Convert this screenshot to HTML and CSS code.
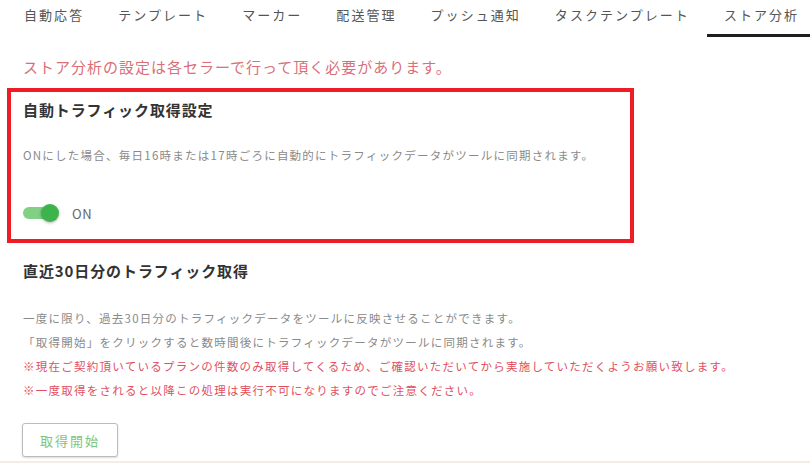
FILE: index.html
```html
<!DOCTYPE html>
<html>
<head>
	<meta charset="utf-8">
	<title>ストア分析</title>
	<link rel="stylesheet" href="styles.css">
</head>
<body>
	<div class="page">
		<div class="tabs">
			<div class="tab">自動応答</div>
			<div class="tab">テンプレート</div>
			<div class="tab">マーカー</div>
			<div class="tab">配送管理</div>
			<div class="tab">プッシュ通知</div>
			<div class="tab">タスクテンプレート</div>
			<div class="tab active">ストア分析</div>
		</div>

		<p class="notice">ストア分析の設定は各セラーで行って頂く必要があります。</p>

		<div class="auto-box">
			<h2 class="title">自動トラフィック取得設定</h2>
			<p class="desc">ONにした場合、毎日16時または17時ごろに自動的にトラフィックデータがツールに同期されます。</p>
			<div class="switch-row">
				<div class="switch">
					<div class="track"></div>
					<div class="knob"></div>
				</div>
				<span class="switch-label">ON</span>
			</div>
		</div>

		<div class="fetch">
			<h2 class="title">直近30日分のトラフィック取得</h2>
			<div class="lines">
				<p class="desc">一度に限り、過去30日分のトラフィックデータをツールに反映させることができます。</p>
				<p class="desc">「取得開始」をクリックすると数時間後にトラフィックデータがツールに同期されます。</p>
				<p class="desc warn">※現在ご契約頂いているプランの件数のみ取得してくるため、ご確認いただいてから実施していただくようお願い致します。</p>
				<p class="desc warn">※一度取得をされると以降この処理は実行不可になりますのでご注意ください。</p>
			</div>
			<button class="start">取得開始</button>
		</div>
	</div>
</body>
</html>
```

FILE: styles.css
```css
html {
	background: #f5ece3;
}

body {
	margin: 0;
	font-family: "Noto Sans CJK JP", "Noto Sans", sans-serif;
}

.page {
	height: 461px;
	padding-left: 7px;
	background: #ffffff;
	box-sizing: border-box;
	overflow: hidden;
}

.tabs {
	display: flex;
}

.tab {
	padding: 6px 17px 10px 17px;
	line-height: 18px;
	font-size: 13px;
	letter-spacing: 2.05px;
	color: #555555;
	white-space: nowrap;
	border-bottom: 3px solid transparent;
}

.tab.active {
	border-bottom-color: #1e1e1e;
	padding-right: 40px;
}

.notice {
	margin: 20px 0 0 16px;
	line-height: 20px;
	font-size: 15px;
	letter-spacing: 1px;
	color: #da6f78;
}

.auto-box {
	width: 627px;
	margin-top: 11px;
	padding: 8px 12px 14px 12px;
	border: 4px solid #ee1c25;
	box-sizing: border-box;
}

.title {
	margin: 0;
	line-height: 20px;
	font-size: 15px;
	font-weight: bold;
	letter-spacing: 0.9px;
	color: #333333;
}

.desc {
	margin: 0;
	line-height: 24px;
	font-size: 11.5px;
	letter-spacing: 1.25px;
	color: #8a8a8a;
	white-space: nowrap;
}

.auto-box .desc {
	margin-top: 23px;
}

.desc.warn {
	color: #e0505f;
}

.switch-row {
	display: flex;
	align-items: center;
	margin-top: 34px;
	height: 24px;
}

.switch {
	position: relative;
	width: 36px;
	height: 24px;
}

.track {
	margin-top: 6px;
	width: 30px;
	height: 12px;
	border-radius: 6px;
	background: #82cf86;
}

.knob {
	position: absolute;
	left: 18px;
	top: 3px;
	width: 18px;
	height: 18px;
	border-radius: 50%;
	background: #3cb44b;
	box-shadow: 0 1px 3px rgba(0, 0, 0, 0.3);
}

.switch-label {
	margin-left: 13px;
	font-size: 13px;
	letter-spacing: 0.5px;
	color: #666666;
}

.fetch {
	padding: 18px 0 0 16px;
}

.lines {
	margin-top: 25px;
}

.start {
	margin: 21px 0 0 -1px;
	width: 96px;
	height: 34px;
	background: #ffffff;
	border: 1px solid #bcbcbc;
	border-radius: 3px;
	font-family: "Noto Sans CJK JP", sans-serif;
	font-size: 13px;
	letter-spacing: 2px;
	color: #7cc67c;
	box-shadow: 0 1px 2px rgba(0, 0, 0, 0.15);
}
```
